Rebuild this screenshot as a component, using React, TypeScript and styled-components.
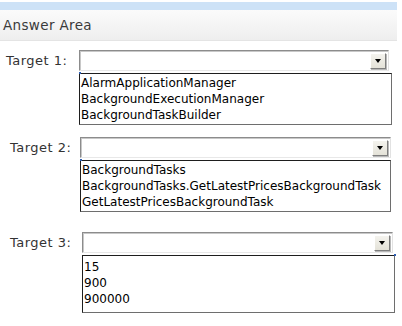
import styled, { createGlobalStyle } from "styled-components";

const GlobalStyle = createGlobalStyle`
  html, body {
    margin: 0;
    padding: 0;
    background: #ffffff;
  }
`;

const Page = styled.div`
  width: 402px;
  height: 326px;
  padding-top: 2px;
  box-sizing: border-box;
  overflow: hidden;
  font-family: "DejaVu Sans", Verdana, sans-serif;
`;

const TopBand = styled.div`
  width: 397px;
  height: 8px;
  background: #cde2f7;
`;

const Header = styled.div`
  width: 394px;
  height: 30px;
  padding-left: 3px;
  display: flex;
  align-items: center;
  background: linear-gradient(#fbfbfb, #eeeeee);
  border-bottom: 1px solid #e4e4e4;
  font-size: 13.5px;
  letter-spacing: 0.35px;
  color: #3a3a3a;
`;

const Form = styled.div`
  display: flex;
  flex-direction: column;
  padding-top: 9px;
`;

const Group = styled.div<{ $gapTop: number }>`
  display: grid;
  grid-template-columns: 79px auto;
  row-gap: 2px;
  margin-top: ${(p) => p.$gapTop}px;
`;

const Label = styled.div<{ $inset: number }>`
  padding-left: ${(p) => p.$inset}px;
  display: flex;
  align-items: center;
  font-size: 13px;
  letter-spacing: 0.5px;
  color: #333333;
`;

const Select = styled.div<{ $shift: number; $width: number }>`
  margin-left: ${(p) => p.$shift}px;
  width: ${(p) => p.$width}px;
  height: 21px;
  box-sizing: border-box;
  display: flex;
  justify-content: flex-end;
  align-items: center;
  padding-right: 2px;
  background: #ffffff;
  border: 1px solid;
  border-color: #8c8c8c #e2e2e2 #e8e8e8 #8c8c8c;
  box-shadow: inset 1px 1px 0 #c8c8c8;
`;

const Arrow = styled.div`
  width: 16px;
  height: 16px;
  box-sizing: border-box;
  display: flex;
  align-items: center;
  justify-content: center;
  background: linear-gradient(#f4f3ee, #e4e2d8);
  border: 1px solid;
  border-color: #ffffff #7e7e7e #7e7e7e #ffffff;
  box-shadow: 1px 1px 0 #b8b8b8;

  &::after {
    content: "";
    border-left: 3.5px solid transparent;
    border-right: 3.5px solid transparent;
    border-top: 4px solid #000000;
  }
`;

const ListBox = styled.div<{ $shift: number; $width: number; $extra: number; $mark: "left" | "right" }>`
  grid-column: 2;
  position: relative;
  margin-left: ${(p) => p.$shift}px;
  width: ${(p) => p.$width}px;
  box-sizing: border-box;
  padding: ${(p) => 1 + p.$extra}px 1px ${(p) => 1 + p.$extra * 2}px 1px;
  border: 1px solid;
  border-color: #1e1e1e #6e6e6e #6e6e6e #1e1e1e;
  background: #ffffff;
  font-family: "DejaVu Sans", Verdana, sans-serif;
  font-size: 12px;
  color: #000000;

  &::before {
    content: "";
    position: absolute;
    top: -2px;
    ${(p) => (p.$mark === "left" ? "left: -1px;" : "right: -2px;")}
    width: 2px;
    height: 2px;
    background: #2f5fb3;
  }
`;

const Item = styled.div`
  height: 16px;
  line-height: 16px;
  white-space: nowrap;
`;

interface Target {
  label: string;
  labelInset: number;
  gapTop: number;
  selectShift: number;
  selectWidth: number;
  listShift: number;
  listWidth: number;
  listExtra: number;
  mark: "left" | "right";
  options: string[];
}

const targets: Target[] = [
  {
    label: "Target 1:",
    labelInset: 6,
    gapTop: 0,
    selectShift: 0,
    selectWidth: 310,
    listShift: 0,
    listWidth: 313,
    listExtra: 0,
    mark: "left",
    options: [
      "AlarmApplicationManager",
      "BackgroundExecutionManager",
      "BackgroundTaskBuilder",
    ],
  },
  {
    label: "Target 2:",
    labelInset: 10,
    gapTop: 12,
    selectShift: 1,
    selectWidth: 311,
    listShift: 1,
    listWidth: 311,
    listExtra: 0,
    mark: "left",
    options: [
      "BackgroundTasks",
      "BackgroundTasks.GetLatestPricesBackgroundTask",
      "GetLatestPricesBackgroundTask",
    ],
  },
  {
    label: "Target 3:",
    labelInset: 10,
    gapTop: 20,
    selectShift: 3,
    selectWidth: 311,
    listShift: 3,
    listWidth: 313,
    listExtra: 2,
    mark: "right",
    options: ["15", "900", "900000"],
  },
];

export default function App() {
  return (
    <>
      <GlobalStyle />
      <Page>
        <TopBand />
        <Header>{"Answer Area"}</Header>
        <Form>
          {targets.map((t) => (
            <Group key={t.label} $gapTop={t.gapTop}>
              <Label $inset={t.labelInset}>{t.label}</Label>
              <Select $shift={t.selectShift} $width={t.selectWidth}>
                <Arrow />
              </Select>
              <ListBox
                $shift={t.listShift}
                $width={t.listWidth}
                $extra={t.listExtra}
                $mark={t.mark}
              >
                {t.options.map((o) => (
                  <Item key={o}>{o}</Item>
                ))}
              </ListBox>
            </Group>
          ))}
        </Form>
      </Page>
    </>
  );
}
